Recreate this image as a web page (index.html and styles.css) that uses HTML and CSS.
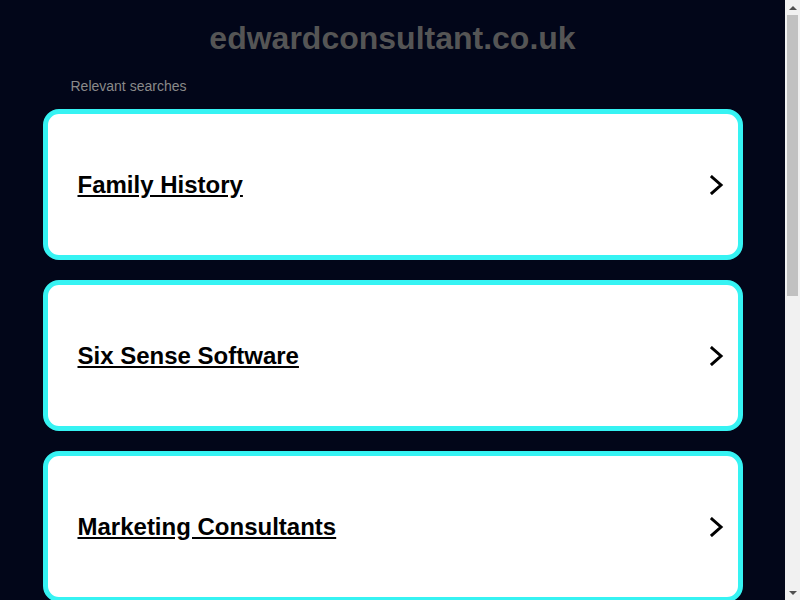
FILE: index.html
```html
<!DOCTYPE html>
<html lang="en">
  <head>
    <meta charset="UTF-8" />
    <title>edwardconsultant.co.uk</title>
    <link rel="stylesheet" href="styles.css">
  </head>
  <body>
    <div class="l-page">
      <div class="l-main">
        <div class="l-wrapper">
          <h1 class="c-domain">edwardconsultant.co.uk</h1>
          <span class="c-label">Relevant searches</span>
          <ul class="c-list">
            <li class="c-card">
              <a href="#" class="c-card__link">Family History</a>
              <svg class="c-card__arrow" viewBox="0 0 14 20" aria-hidden="true">
                <path d="M2 2l9 8-9 8" />
              </svg>
            </li>
            <li class="c-card">
              <a href="#" class="c-card__link">Six Sense Software</a>
              <svg class="c-card__arrow" viewBox="0 0 14 20" aria-hidden="true">
                <path d="M2 2l9 8-9 8" />
              </svg>
            </li>
            <li class="c-card">
              <a href="#" class="c-card__link">Marketing Consultants</a>
              <svg class="c-card__arrow" viewBox="0 0 14 20" aria-hidden="true">
                <path d="M2 2l9 8-9 8" />
              </svg>
            </li>
          </ul>
        </div>
      </div>
      <div class="c-scrollbar" aria-hidden="true">
        <div class="c-scrollbar__btn"><span class="c-scrollbar__up"></span></div>
        <div class="c-scrollbar__track">
          <div class="c-scrollbar__thumb"></div>
        </div>
        <div class="c-scrollbar__btn"><span class="c-scrollbar__down"></span></div>
      </div>
    </div>
  </body>
</html>
```
FILE: styles.css
```css
:root {
  --bg: #020619;
  --muted: #555555;
  --label: #8a8a8a;
  --accent: #36f3f3;
  --white: #ffffff;
  --track: #f1f1f1;
  --thumb: #c1c1c1;
  --arrow: #505050;
}

html {
  background: var(--bg);
}

body {
  margin: 0;
  font-family: "Liberation Sans", Arial, sans-serif;
}

.l-page {
  display: flex;
  height: 100vh;
  overflow: hidden;
}

.l-main {
  flex: 1;
  overflow: hidden;
}

.l-wrapper {
  width: 700px;
  margin: 0 auto;
  padding-top: 20px;
}

.c-domain {
  margin: 0;
  text-align: center;
  font-size: 32px;
  line-height: 36px;
  font-weight: 700;
  color: var(--muted);
}

.c-label {
  display: block;
  margin: 22px 0 0 28px;
  font-size: 14px;
  line-height: 16px;
  color: var(--label);
}

.c-list {
  list-style-type: none;
  margin: 15px 0 0;
  padding: 0;
  display: flex;
  flex-direction: column;
  gap: 20px;
}

.c-card {
  display: flex;
  align-items: center;
  justify-content: space-between;
  flex-shrink: 0;
  height: 141px;
  padding: 0 14px 0 30px;
  background: var(--white);
  border: 5px solid var(--accent);
  border-radius: 16px;
}

.c-card__link {
  font-size: 24px;
  font-weight: 700;
  color: #000000;
  text-decoration: underline;
}

.c-card__arrow {
  width: 14px;
  height: 20px;
  fill: none;
  stroke: #000000;
  stroke-width: 3;
  stroke-linecap: square;
}

/* window scrollbar */
.c-scrollbar {
  width: 15px;
  display: flex;
  flex-direction: column;
  background: var(--track);
}

.c-scrollbar__btn {
  height: 15px;
  display: flex;
  align-items: center;
  justify-content: center;
}

.c-scrollbar__up,
.c-scrollbar__down {
  width: 0;
  height: 0;
  border-left: 4px solid transparent;
  border-right: 4px solid transparent;
}

.c-scrollbar__up {
  border-bottom: 4px solid var(--arrow);
}

.c-scrollbar__down {
  border-top: 4px solid var(--arrow);
}

.c-scrollbar__track {
  flex: 1;
  padding: 0 2px;
}

.c-scrollbar__thumb {
  height: 281px;
  background: var(--thumb);
}
```
